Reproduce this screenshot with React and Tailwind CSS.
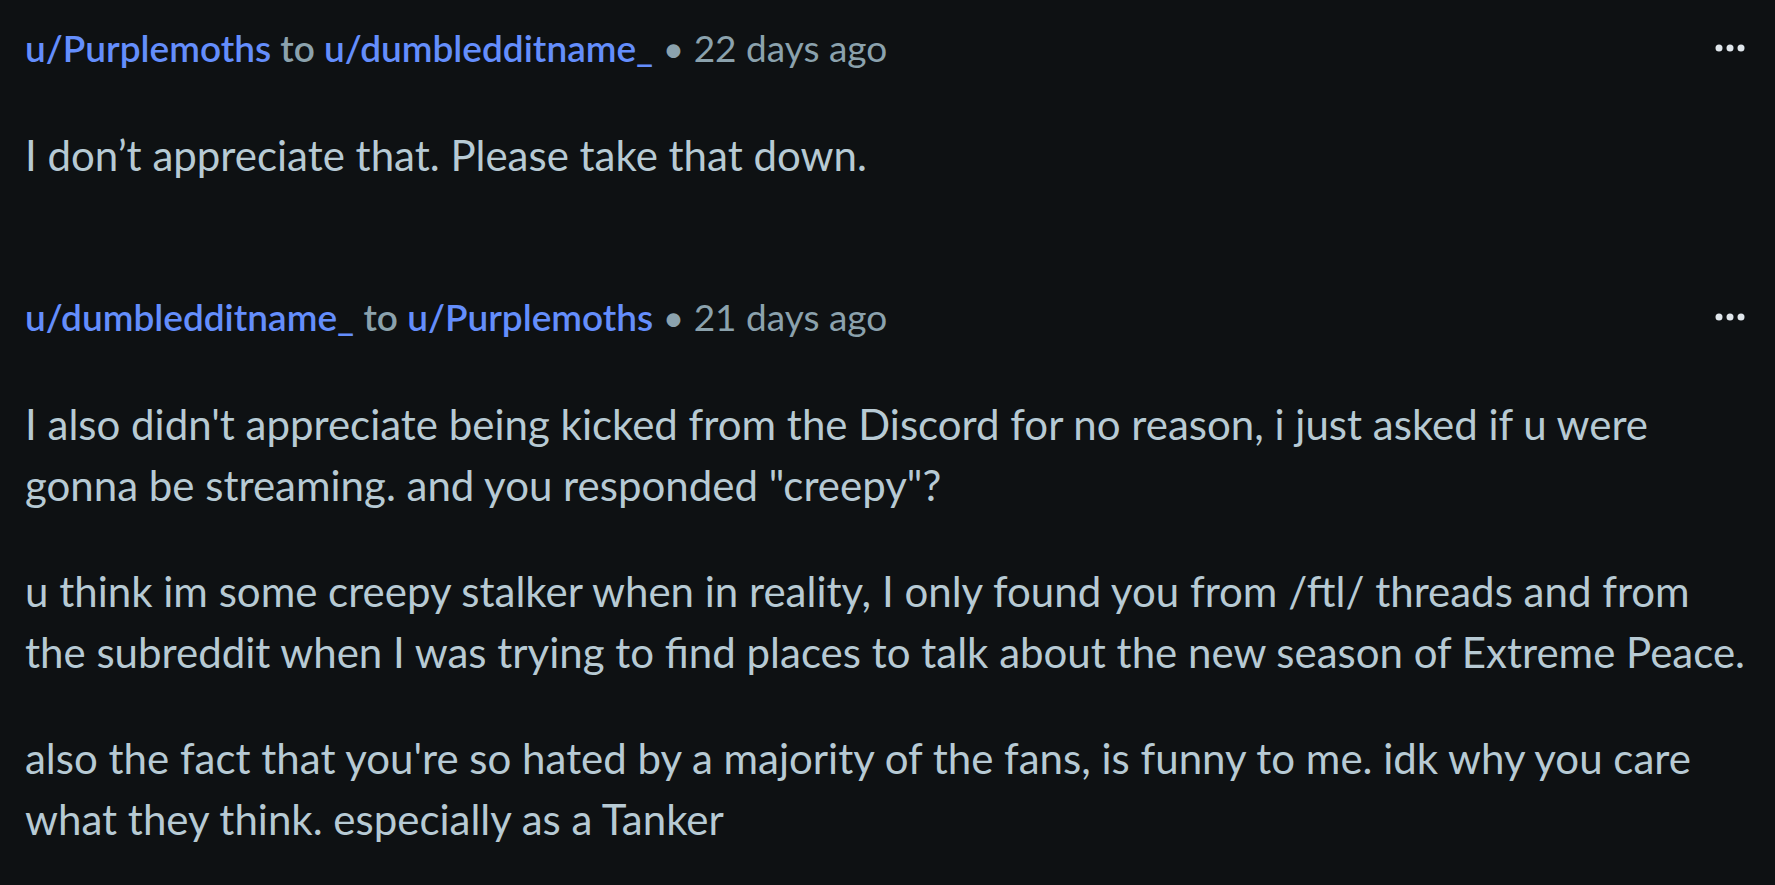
import React from "react";

const Dots = () => (
  <svg width="30" height="8" viewBox="0 0 30 8" className="text-[#dfe6eb]">
    <circle cx="4" cy="4" r="3.5" fill="currentColor" />
    <circle cx="15" cy="4" r="3.5" fill="currentColor" />
    <circle cx="26" cy="4" r="3.5" fill="currentColor" />
  </svg>
);

const User = ({ name }) => <span className="text-[#648efc]">u/{name}</span>;

const Comment = ({ from, to, ago, paragraphs }) => (
  <div className="flex flex-col">
    <div className="flex h-[48px] items-center justify-between">
      <div className="text-[37px] leading-[48px]">
        <span className="font-semibold">
          <User name={from} /> <span className="text-[#8ba2ad]">to</span> <User name={to} />
        </span>
        <span className="text-[#8ba2ad]"> • {ago}</span>
      </div>
      <div className="pr-[5px]">
        <Dots />
      </div>
    </div>
    <div className="mt-[53px] flex flex-col gap-[45px] text-[42px] leading-[61px] text-[#b7cad4]">
      {paragraphs.map((p, i) => (
        <p key={i}>{p}</p>
      ))}
    </div>
  </div>
);

export default function App() {
  return (
    <div className="min-h-screen bg-[#0e1113] px-[25px] pt-[24px] font-['Lato',sans-serif]">
      <div className="flex flex-col gap-[107px]">
        <Comment
          from="Purplemoths"
          to="dumbledditname_"
          ago="22 days ago"
          paragraphs={["I don’t appreciate that. Please take that down."]}
        />
        <Comment
          from="dumbledditname_"
          to="Purplemoths"
          ago="21 days ago"
          paragraphs={[
            "I also didn't appreciate being kicked from the Discord for no reason, i just asked if u were gonna be streaming. and you responded \"creepy\"?",
            "u think im some creepy stalker when in reality, I only found you from /ftl/ threads and from the subreddit when I was trying to find places to talk about the new season of Extreme Peace.",
            "also the fact that you're so hated by a majority of the fans, is funny to me. idk why you care what they think. especially as a Tanker",
          ]}
        />
      </div>
    </div>
  );
}
